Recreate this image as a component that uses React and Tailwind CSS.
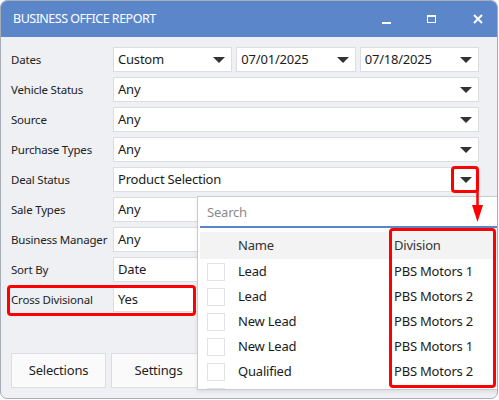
import React from 'react';

const FONT = { fontFamily: '"Noto Sans", "Open Sans", Arial, sans-serif' };

const Caret = () => (
  <svg width="12" height="6" viewBox="0 0 12 6" className="shrink-0">
    <path d="M0 0 H12 L6 6 Z" fill="#333" />
  </svg>
);

const Field = ({ value, caret = true, className = '' }) => (
  <div className={`h-[25px] bg-white border border-[#dcdde1] flex items-center pl-[4px] pr-[6px] text-[13px] tracking-[-0.2px] text-[#1b1b1b] ${className}`}>
    <span className="flex-1 truncate">{value}</span>
    {caret && <Caret />}
  </div>
);

const Row = ({ label, children }) => (
  <div className="flex items-center h-[25px]">
    <div className="w-[102px] shrink-0 whitespace-nowrap text-[11.5px] tracking-[-0.2px] text-[#222]">{label}</div>
    <div className="w-[366px]">{children}</div>
  </div>
);

const items = [
  ['Lead', 'PBS Motors 1'],
  ['Lead', 'PBS Motors 2'],
  ['New Lead', 'PBS Motors 2'],
  ['New Lead', 'PBS Motors 1'],
  ['Qualified', 'PBS Motors 2'],
];

export default function App() {
  return (
    <div className="relative w-[499px] h-[400px] bg-white overflow-hidden" style={FONT}>
      {/* window */}
      <div className="relative w-[498px] h-[399px] border border-[#a7aeb8] rounded-[7px] overflow-hidden flex flex-col bg-[#eff0f4]">
        <div className="h-[36px] shrink-0 bg-[#5b87ca] flex items-center pl-[12px] text-white text-[12.5px] tracking-[-0.5px]">
          <span className="flex-1">BUSINESS OFFICE REPORT</span>
          <div className="flex items-center">
            <div className="w-[9px] h-[2px] bg-white mt-[7px]" />
            <div className="ml-[36px] w-[9px] h-[8px] border border-white border-t-2" />
            <svg className="ml-[37px] mr-[14px]" width="10" height="10" viewBox="0 0 10 10">
              <path d="M1 1 L9 9 M9 1 L1 9" stroke="#fff" strokeWidth="2" />
            </svg>
          </div>
        </div>

        <div className="flex-1 flex flex-col gap-[5px] pl-[10px] pt-[10px]">
          <Row label="Dates">
            <div className="grid grid-cols-3 gap-[4px]">
              <Field value="Custom" />
              <Field value="07/01/2025" />
              <Field value="07/18/2025" />
            </div>
          </Row>
          <Row label="Vehicle Status"><Field value="Any" /></Row>
          <Row label="Source"><Field value="Any" /></Row>
          <Row label="Purchase Types"><Field value="Any" /></Row>
          <Row label="Deal Status"><Field value="Product Selection" /></Row>
          <Row label="Sale Types"><Field value="Any" /></Row>
          <Row label="Business Manager"><Field value="Any" /></Row>
          <Row label="Sort By"><Field value="Date" /></Row>
          <Row label="Cross Divisional"><Field value="Yes" caret={false} /></Row>

          <div className="flex gap-[5px] mt-[36px]">
            <button className="w-[95px] h-[35px] bg-[#fafafa] border border-[#dcdde1] text-[13px] tracking-[-0.2px] text-[#222]">Selections</button>
            <button className="w-[95px] h-[35px] bg-[#fafafa] border border-[#dcdde1] text-[13px] tracking-[-0.2px] text-[#222]">Settings</button>
          </div>
        </div>

        {/* dropdown panel */}
        <div className="absolute left-[196px] top-[195px] w-[330px] h-[194px] overflow-hidden bg-white border border-[#c9cbd0] p-[2px] flex flex-col shadow-[0_2px_4px_rgba(0,0,0,0.08)] text-[13px] tracking-[-0.2px]">
          <div className="h-[29px] shrink-0 border-b-2 border-[#5b87ca] flex items-center pl-[7px] text-[#8a8a8a]">Search</div>
          <div className="mt-[4px] h-[27px] shrink-0 bg-[#f3f3f4] flex items-center text-[#333]">
            <span className="w-[194px] pl-[38px]">Name</span>
            <span>Division</span>
          </div>
          {items.map(([n, d], i) => (
            <div key={i} className="h-[25px] shrink-0 flex items-center text-[#1b1b1b]">
              <div className="ml-[7px] w-[18px] h-[18px] border border-[#e2e3e6] bg-white shrink-0" />
              <span className="ml-[13px] w-[156px]">{n}</span>
              <span>{d}</span>
            </div>
          ))}
          <div className="h-[25px] shrink-0 flex items-center">
            <div className="ml-[7px] w-[18px] h-[18px] border border-[#e2e3e6] bg-white shrink-0" />
          </div>
        </div>
      </div>

      {/* annotations */}
      <div className="absolute left-[7px] top-[285px] w-[189px] h-[31px] border-[3px] border-[#ff0000] rounded-[4px]" />
      <div className="absolute left-[451px] top-[166px] w-[28px] h-[27px] border-[3px] border-[#ff0000] rounded-[4px]" />
      <div className="absolute left-[389px] top-[228px] w-[107px] h-[160px] border-[3px] border-[#ff0000] rounded-[4px]" />
      <svg className="absolute left-[470px] top-[190px]" width="16" height="34" viewBox="0 0 16 34">
        <path d="M7.5 0 V20" stroke="#ff0000" strokeWidth="2.5" />
        <path d="M2 15 H13 L7.5 32 Z" fill="#ff0000" />
      </svg>
    </div>
  );
}
